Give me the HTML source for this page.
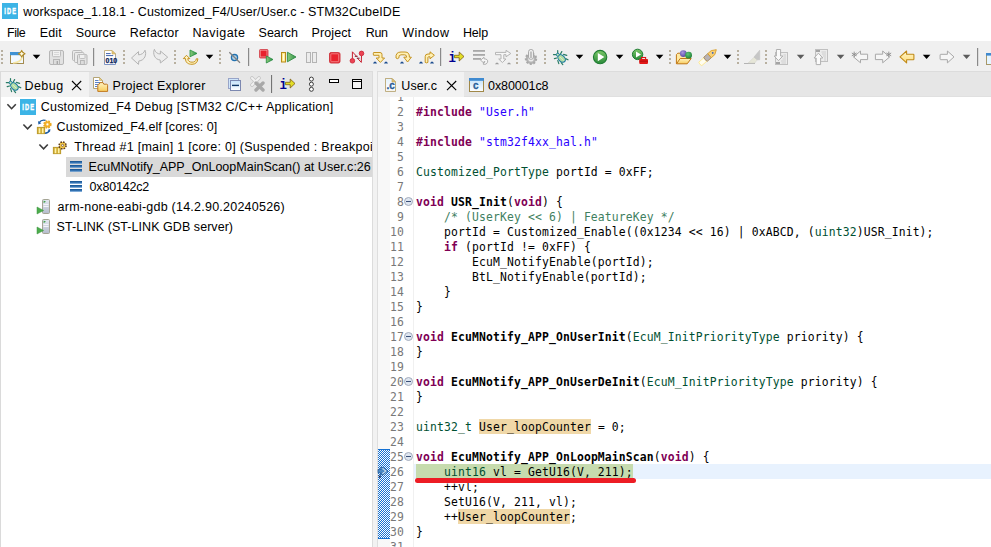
<!DOCTYPE html>
<html lang="en"><head><meta charset="utf-8"><title>STM32CubeIDE</title>
<style>
*{margin:0;padding:0;box-sizing:border-box}
html,body{width:991px;height:547px;overflow:hidden;background:#fff}
body{position:relative;font-family:"Liberation Sans",sans-serif;font-size:12.5px;color:#000}
.a{position:absolute;white-space:pre}
.t{position:absolute;white-space:pre;line-height:16px;height:16px;transform-origin:0 50%}
#title{left:0;top:0;width:991px;height:22px;background:#fff}
#menu{left:0;top:22px;width:991px;height:19px;background:#fff}
#tool{left:0;top:41px;width:991px;height:31px;background:#f0f0f0}
#work{left:0;top:72px;width:991px;height:475px;background:#f2f2f2}
#lp{left:0;top:71px;width:373px;height:476px;background:#fff;border-left:1px solid #dadada;border-right:1px solid #dcdcdc;border-top:1px solid #dcdcdc}
#ltab{left:1px;top:72px;width:371px;height:25px;background:#e6e6e6;border-bottom:1px solid #e0e0e0}
#ltabA{left:1px;top:72px;width:88px;height:25px;background:#f2f2f2}
#rp{left:377px;top:71px;width:614px;height:476px;background:#fff;border-left:1px solid #dedede;border-top:1px solid #dcdcdc}
#rtab{left:378px;top:72px;width:613px;height:25px;background:#e6e6e6;border-bottom:1px solid #e0e0e0}
#rtabA{left:378px;top:72px;width:86px;height:25px;background:#f2f2f2}
#gut{left:378px;top:97px;width:12px;height:450px;background:#f8f8f8}
.code{position:absolute;left:416px;white-space:pre;font-family:"DejaVu Sans Mono","Liberation Mono",monospace;font-size:11.4px;letter-spacing:0.137px;line-height:15px;height:15px;color:#000}
.ln{position:absolute;left:378px;width:26px;text-align:right;white-space:pre;font-family:"DejaVu Sans Mono","Liberation Mono",monospace;font-size:11.4px;letter-spacing:0.137px;line-height:15px;height:15px;color:#787878}
.k{color:#7f0055;font-weight:bold}
.s{color:#2a00ff}
.c{color:#3f7f5f}
.y{color:#005032}
.f{font-weight:bold}
.o{}
.sel{left:66px;top:157px;width:306px;height:20px;background:#d9d9d9}
</style></head>
<body>
<div class="a" id="title"></div>
<div class="a" id="menu"></div>
<div class="a" id="tool"></div>
<div class="a" id="work"></div>
<div class="a" id="lp"></div><div class="a" id="ltab"></div><div class="a" id="ltabA"></div>
<div class="a" id="rp"></div><div class="a" id="rtab"></div><div class="a" id="rtabA"></div><div class="a" id="gut"></div>
<div class="t" style="left:23.3px;top:4px;letter-spacing:0.103px">workspace_1.18.1 - Customized_F4/User/User.c - STM32CubeIDE</div>
<div class="t" style="left:7.0px;top:25px;letter-spacing:-0.467px">File</div>
<div class="t" style="left:39.7px;top:25px;letter-spacing:0.133px">Edit</div>
<div class="t" style="left:75.7px;top:25px;letter-spacing:0.120px">Source</div>
<div class="t" style="left:129.7px;top:25px;letter-spacing:0.257px">Refactor</div>
<div class="t" style="left:192.4px;top:25px;letter-spacing:0.457px">Navigate</div>
<div class="t" style="left:258.6px;top:25px;letter-spacing:-0.040px">Search</div>
<div class="t" style="left:311.6px;top:25px;letter-spacing:0.100px">Project</div>
<div class="t" style="left:365.8px;top:25px;letter-spacing:-0.400px">Run</div>
<div class="t" style="left:402.2px;top:25px;letter-spacing:0.480px">Window</div>
<div class="t" style="left:463.0px;top:25px;letter-spacing:-0.200px">Help</div>
<div class="t" style="left:24.4px;top:78px;letter-spacing:0.500px">Debug</div>
<div class="t" style="left:112.6px;top:78px;letter-spacing:0.253px">Project Explorer</div>
<div class="t" style="left:401.3px;top:78px;letter-spacing:0.080px">User.c</div>
<div class="t" style="left:488.0px;top:78px;letter-spacing:-0.075px">0x80001c8</div>
<div class="t" style="left:40.7px;top:99px;letter-spacing:0.236px">Customized_F4 Debug [STM32 C/C++ Application]</div>
<div class="t" style="left:56.6px;top:119px;letter-spacing:0.059px">Customized_F4.elf [cores: 0]</div>
<div class="a" style="left:60px;top:137px;width:312px;height:20px;overflow:hidden"><div class="t" style="left:14.3px;top:2px;letter-spacing:0.290px">Thread #1 [main] 1 [core: 0] (Suspended : Breakpoint)</div></div>
<div class="a sel"></div>
<div class="t" style="left:88.6px;top:159px;letter-spacing:0.019px">EcuMNotify_APP_OnLoopMainScan() at User.c:26</div>
<div class="t" style="left:89.6px;top:179px;letter-spacing:-0.200px">0x80142c2</div>
<div class="t" style="left:57.6px;top:199px;letter-spacing:0.234px">arm-none-eabi-gdb (14.2.90.20240526)</div>
<div class="t" style="left:56.6px;top:219px;letter-spacing:0.052px">ST-LINK (ST-LINK GDB server)</div>
<div class="a" style="left:479px;top:419px;width:112px;height:15px;background:#f0d8a8"></div><div class="a" style="left:458px;top:509px;width:112px;height:15px;background:#f0d8a8"></div>
<div class="a" style="left:414px;top:464px;width:577px;height:15px;background:#e8f2fe"></div>
<div class="a" style="left:416px;top:464px;width:217px;height:15px;background:#c6dbae"></div>
<div class="a" style="left:378px;top:449px;width:12px;height:90px;background:conic-gradient(#1470d2 25%,#fff 0 50%,#1470d2 0 75%,#fff 0) 0 0/2px 2px;border-top:1px solid #1470d2;border-bottom:1px solid #1470d2"></div>
<div class="a" style="left:413px;top:97px;width:1px;height:450px;background:#f0f0f0"></div>
<div class="a" style="left:378px;top:97px;width:613px;height:450px;overflow:hidden">
<div class="ln" style="left:0;top:-7px">1</div>
<div class="ln" style="left:0;top:8px">2</div><div class="code" style="left:38px;top:8px"><span class="k">#include</span> <span class="s">&quot;User.h&quot;</span></div>
<div class="ln" style="left:0;top:23px">3</div>
<div class="ln" style="left:0;top:38px">4</div><div class="code" style="left:38px;top:38px"><span class="k">#include</span> <span class="s">&quot;stm32f4xx_hal.h&quot;</span></div>
<div class="ln" style="left:0;top:53px">5</div>
<div class="ln" style="left:0;top:68px">6</div><div class="code" style="left:38px;top:68px"><span class="y">Customized_PortType</span> portId = 0xFF;</div>
<div class="ln" style="left:0;top:83px">7</div>
<div class="ln" style="left:0;top:98px">8</div><div class="code" style="left:38px;top:98px"><span class="k">void</span> <span class="f">USR_Init</span>(<span class="k">void</span>) {</div>
<div class="ln" style="left:0;top:113px">9</div><div class="code" style="left:38px;top:113px">    <span class="c">/* (UserKey &lt;&lt; 6) | FeatureKey */</span></div>
<div class="ln" style="left:0;top:128px">10</div><div class="code" style="left:38px;top:128px">    portId = Customized_Enable((0x1234 &lt;&lt; 16) | 0xABCD, (<span class="y">uint32</span>)USR_Init);</div>
<div class="ln" style="left:0;top:143px">11</div><div class="code" style="left:38px;top:143px">    <span class="k">if</span> (portId != 0xFF) {</div>
<div class="ln" style="left:0;top:158px">12</div><div class="code" style="left:38px;top:158px">        EcuM_NotifyEnable(portId);</div>
<div class="ln" style="left:0;top:173px">13</div><div class="code" style="left:38px;top:173px">        BtL_NotifyEnable(portId);</div>
<div class="ln" style="left:0;top:188px">14</div><div class="code" style="left:38px;top:188px">    }</div>
<div class="ln" style="left:0;top:203px">15</div><div class="code" style="left:38px;top:203px">}</div>
<div class="ln" style="left:0;top:218px">16</div>
<div class="ln" style="left:0;top:233px">17</div><div class="code" style="left:38px;top:233px"><span class="k">void</span> <span class="f">EcuMNotify_APP_OnUserInit</span>(<span class="y">EcuM_InitPriorityType</span> priority) {</div>
<div class="ln" style="left:0;top:248px">18</div><div class="code" style="left:38px;top:248px">}</div>
<div class="ln" style="left:0;top:263px">19</div>
<div class="ln" style="left:0;top:278px">20</div><div class="code" style="left:38px;top:278px"><span class="k">void</span> <span class="f">EcuMNotify_APP_OnUserDeInit</span>(<span class="y">EcuM_InitPriorityType</span> priority) {</div>
<div class="ln" style="left:0;top:293px">21</div><div class="code" style="left:38px;top:293px">}</div>
<div class="ln" style="left:0;top:308px">22</div>
<div class="ln" style="left:0;top:323px">23</div><div class="code" style="left:38px;top:323px"><span class="y">uint32_t</span> <span class="o">User_loopCounter</span> = 0;</div>
<div class="ln" style="left:0;top:338px">24</div>
<div class="ln" style="left:0;top:353px">25</div><div class="code" style="left:38px;top:353px"><span class="k">void</span> <span class="f">EcuMNotify_APP_OnLoopMainScan</span>(<span class="k">void</span>) {</div>
<div class="ln" style="left:0;top:368px">26</div><div class="code" style="left:38px;top:368px">    <span class="y">uint16</span> vl = GetU16(V, 211);</div>
<div class="ln" style="left:0;top:383px">27</div><div class="code" style="left:38px;top:383px">    ++vl;</div>
<div class="ln" style="left:0;top:398px">28</div><div class="code" style="left:38px;top:398px">    SetU16(V, 211, vl);</div>
<div class="ln" style="left:0;top:413px">29</div><div class="code" style="left:38px;top:413px">    ++<span class="o">User_loopCounter</span>;</div>
<div class="ln" style="left:0;top:428px">30</div><div class="code" style="left:38px;top:428px">}</div>
<div class="ln" style="left:0;top:443px">31</div>
</div>
<div class="a" style="left:415px;top:478px;width:221px;height:5px;border-radius:3px;background:#ed1c24"></div>
<svg class="a" style="left:0;top:0" width="991" height="547" viewBox="0 0 991 547">
<defs>
<linearGradient id="gGreen" x1="0" y1="0" x2="0" y2="1"><stop offset="0" stop-color="#7cc868"/><stop offset="1" stop-color="#2a8a3a"/></linearGradient>
<linearGradient id="gTri" x1="0" y1="0" x2="1" y2="0"><stop offset="0" stop-color="#8ccc7c"/><stop offset="1" stop-color="#2e9048"/></linearGradient>
<linearGradient id="gYel" x1="0" y1="0" x2="0" y2="1"><stop offset="0" stop-color="#fff6cc"/><stop offset="1" stop-color="#ffdc78"/></linearGradient>
<linearGradient id="gFold" x1="0" y1="0" x2="0" y2="1"><stop offset="0" stop-color="#fff4c4"/><stop offset="1" stop-color="#f8cc5c"/></linearGradient>
<linearGradient id="gPage" x1="0" y1="0" x2="0" y2="1"><stop offset="0" stop-color="#c8b480"/><stop offset="1" stop-color="#7c94c4"/></linearGradient>
<linearGradient id="gWin" x1="0" y1="0" x2="0" y2="1"><stop offset="0" stop-color="#c4e2fa"/><stop offset="1" stop-color="#ffffff"/></linearGradient>
<linearGradient id="gBar" x1="0" y1="0" x2="0" y2="1"><stop offset="0" stop-color="#14508e"/><stop offset="1" stop-color="#4c8ccc"/></linearGradient>
<linearGradient id="gSrv" x1="0" y1="0" x2="0" y2="1"><stop offset="0" stop-color="#e4e8f0"/><stop offset="1" stop-color="#b4bccc"/></linearGradient>
<radialGradient id="gPur" cx=".4" cy=".35" r=".7"><stop offset="0" stop-color="#a898e0"/><stop offset="1" stop-color="#5444a0"/></radialGradient>
<radialGradient id="gGrn" cx=".4" cy=".35" r=".7"><stop offset="0" stop-color="#60c878"/><stop offset="1" stop-color="#1c7c34"/></radialGradient>
<g id="dots" fill="#b8b0a0"><rect x="0" y="50" width="2" height="2"/><rect x="0" y="54" width="2" height="2"/><rect x="0" y="58" width="2" height="2"/><rect x="0" y="62" width="2" height="2"/></g>
<polygon id="dd" points="0,54.8 7.6,54.8 3.8,59"/>
<g id="bug">
 <g stroke="#2a7c64" stroke-width="1.2" stroke-linecap="round" fill="none">
  <path d="M10.5,78.5V81M6.3,82.6H9M14.6,79.6L13.4,81.8M16.4,82.4L19.6,83.4M18.4,86.6L20.8,87.8M7.2,86.7L9.6,86M10.6,88.6L11.6,91.6M14,90.6L15.6,92.6"/>
 </g>
 <ellipse cx="14.4" cy="86.4" rx="4.4" ry="3" transform="rotate(45 14.4 86.4)" fill="#b4dca4" stroke="#1c7ca0" stroke-width="1.1"/>
 <path d="M12.6,84.8L16.4,88.4" stroke="#d8f0cc" stroke-width="1"/>
 <circle cx="10.6" cy="82.7" r="1.5" fill="#c8e8b0" stroke="#1c7ca0" stroke-width="1"/>
</g>
<g id="istep">
 <text transform="translate(279.5 89.2) scale(.8 1)" font-family="'Liberation Mono',monospace" font-weight="bold" font-size="15.5" fill="#000090">i</text>
 <polygon points="285.4,82.3 290.2,82.3 290.2,79 295,83.5 290.2,88 290.2,84.7 285.4,84.7" fill="#e2de26" stroke="#7c5c14" stroke-width=".8" stroke-linejoin="round"/>
</g>
<g id="ide">
 <rect x="0" y="0" width="16" height="16" fill="#3cb4e6"/>
 <text transform="translate(2.2 11.3) scale(.6 1)" font-family="'Liberation Sans',sans-serif" font-weight="bold" font-size="9.4" letter-spacing="2" fill="#fff" stroke="#fff" stroke-width=".5">IDE</text>
</g>
<path id="chev" d="M0.2,0L4.4,4.4L8.6,0" fill="none" stroke="#3c3c3c" stroke-width="1.6"/>
<g id="stack" fill="url(#gBar)"><rect x="70" y="161" width="12" height="2.7"/><rect x="70" y="165" width="12" height="2.7"/><rect x="70" y="169" width="12" height="2.7"/></g>
<g id="proc">
 <rect x="42.5" y="199.5" width="7" height="14" rx="1" fill="url(#gSrv)" stroke="#a4a494"/>
 <path d="M43.5,204.5H48.5M43.5,206.5H48.5" stroke="#f4f4f8" stroke-width="1"/>
 <polygon points="43.6,200.6 46,201.8 43.6,203" fill="#3c9c48"/>
 <polygon points="37,207 43.6,210.5 37,214" fill="#4cac4c" stroke="#3c9440" stroke-width=".5"/>
</g>
<g id="fold"><circle cx="408.5" cy="0" r="4" fill="#dde5f0" stroke="#a4acbc" stroke-width="1"/><rect x="406" y="-.5" width="5" height="1" fill="#3a5078"/></g>
<g id="xclose" stroke="#000" stroke-width="1.1"><path d="M0,0L9.2,9.2M9.2,0L0,9.2"/></g>
</defs>
<!-- title icon -->
<use href="#ide" x="2" y="3"/>
<!-- toolbar handles, separators, dropdowns -->
<use href="#dots" x="1"/><use href="#dots" x="123"/><use href="#dots" x="174"/><use href="#dots" x="219"/><use href="#dots" x="516"/><use href="#dots" x="544"/><use href="#dots" x="669"/><use href="#dots" x="737"/><use href="#dots" x="765"/>
<g fill="#8a8a8a"><rect x="93" y="48" width="1.2" height="18"/><rect x="248" y="48" width="1.2" height="18"/><rect x="440" y="48" width="1.2" height="18"/><rect x="977" y="48" width="1.2" height="18"/></g>
<g fill="#000"><use href="#dd" x="32.7"/><use href="#dd" x="205.7"/><use href="#dd" x="575.7"/><use href="#dd" x="615.8"/><use href="#dd" x="655.8"/><use href="#dd" x="723.7"/><use href="#dd" x="922.8"/></g>
<g fill="#5c5c5c"><use href="#dd" x="796.8"/><use href="#dd" x="836.8"/><use href="#dd" x="962.8"/></g>
<!-- new -->
<rect x="10.5" y="52.5" width="13" height="11" fill="#f2f9ff" stroke="#a48c50"/>
<rect x="10" y="52" width="10" height="3.2" fill="#3f92d4"/>
<path d="M13,63Q21,62.5 22.3,56.5" fill="none" stroke="#f6e6a4" stroke-width="1.6"/>
<polygon points="21.7,50.4 22.9,52.5 25,53.7 22.9,54.9 21.7,57 20.5,54.9 18.4,53.7 20.5,52.5" fill="#fffbe4" stroke="#b08a24" stroke-width="1.1" stroke-linejoin="round"/>
<!-- save (disabled) -->
<rect x="49.5" y="50.5" width="14" height="14" rx="1.5" fill="#e2e2e2" stroke="#b6b6b6"/>
<rect x="52.5" y="50.5" width="8" height="6.2" rx="1" fill="#f0f0f0" stroke="#bcbcbc"/>
<path d="M54,52.5H59M54,54.5H59" stroke="#d0d0d0" stroke-width=".8"/>
<rect x="53.5" y="59.5" width="6" height="5" fill="#dcdcdc" stroke="#b6b6b6"/>
<rect x="56.6" y="61" width="1.4" height="3" fill="#a8a8a8"/>
<!-- save all (disabled) -->
<rect x="72.5" y="50.5" width="9.5" height="10" rx="1.2" fill="#ebebeb" stroke="#bababa"/>
<rect x="74.5" y="52.5" width="9.5" height="10" rx="1.2" fill="#ebebeb" stroke="#bababa"/>
<rect x="77.5" y="54.5" width="9.5" height="10" rx="1.2" fill="#e4e4e4" stroke="#b6b6b6"/>
<rect x="79.5" y="54.5" width="5.5" height="4" rx=".8" fill="#f0f0f0" stroke="#c0c0c0"/>
<rect x="80.5" y="60.5" width="3.8" height="4" fill="#dcdcdc" stroke="#b6b6b6"/>
<!-- binary file -->
<path d="M104.5,50.5H112L115.5,54V64.5H104.5Z" fill="#fff" stroke="url(#gPage)"/>
<path d="M112,50.5V54H115.5Z" fill="#e6c678" stroke="#c8a858" stroke-width=".6"/>
<rect x="106" y="53" width="4.6" height="1.1" fill="#5472b4"/><rect x="106" y="55" width="7.2" height="1.1" fill="#5472b4"/>
<text x="105.6" y="63.3" font-family="'Liberation Sans',sans-serif" font-weight="bold" font-size="7.6" fill="#0a2258" stroke="#0a2258" stroke-width=".25" textLength="11.6" lengthAdjust="spacingAndGlyphs">010</text>
<!-- undo / redo (disabled) -->
<path d="M131.5,58L138.5,51.6V54.8C141.5,54.8 144,53 145,50.2C146.8,54 145,60.5 138.8,61L138.5,64.4Z" fill="#ededed" stroke="#b4b4b4" stroke-linejoin="round"/>
<path d="M167.7,57.2L160.4,51V54C157.5,54 155.2,52.2 154.4,49.3C152.5,53.5 154.5,59.5 160.2,60L160.4,63Z" fill="#ededed" stroke="#b4b4b4" stroke-linejoin="round"/>
<!-- re-run -->
<polygon points="190,50 197,53.4 190,56.8" fill="url(#gTri)" stroke="#22903e" stroke-width=".8" stroke-linejoin="round"/>
<path d="M186.5,55.3L189.8,58.6H187.8C187.8,61.2 189.8,62.2 192,62.2C194.4,62.2 196,61.2 196.3,58.8H197.9C197.6,62.4 195.4,64.3 192,64.3C188.2,64.3 185.5,62.8 185.5,58.6H183.3Z" fill="#fff2c0" stroke="#c08a10" stroke-width=".9" stroke-linejoin="round"/>
<!-- skip breakpoints -->
<circle cx="234.5" cy="57.6" r="3.1" fill="#b4d2e6" stroke="#2272b0" stroke-width="1.3"/>
<path d="M229.3,52.3L240,62.8" stroke="#808080" stroke-width="1.2"/>
<!-- terminate & relaunch -->
<rect x="259.5" y="49.5" width="8.5" height="8.5" rx="1" fill="#e8222c" stroke="#d8545c"/>
<rect x="260.6" y="50.6" width="6.3" height="6.3" fill="none" stroke="#f4a4a4" stroke-width=".6"/>
<polygon points="266.3,56 273,59.5 266.3,63" fill="url(#gTri)" stroke="#22883c" stroke-width=".8" stroke-linejoin="round"/>
<!-- resume -->
<rect x="281.5" y="52.5" width="4" height="9.5" fill="#ffe88c" stroke="#b88c18"/>
<rect x="283" y="54" width="1.2" height="6.5" fill="#fffbe0"/>
<polygon points="287.4,52.2 296,57 287.4,61.8" fill="url(#gTri)" stroke="#2e8a44" stroke-width=".9" stroke-linejoin="round"/>
<!-- suspend (disabled) -->
<rect x="306.5" y="52.5" width="4" height="10" fill="#ececec" stroke="#b4b4b4"/><rect x="312.5" y="52.5" width="4" height="10" fill="#ececec" stroke="#b4b4b4"/>
<!-- terminate -->
<rect x="329.5" y="52.5" width="10.5" height="10.5" rx="1.6" fill="#e8222c" stroke="#d03c44"/>
<rect x="330.8" y="53.8" width="7.9" height="7.9" rx=".6" fill="none" stroke="#f6a0a0" stroke-width=".7"/>
<!-- disconnect -->
<g stroke="#c82030" stroke-width="1" fill="none"><path d="M352.4,58.5V51.8L356.6,56.3M357.4,58.2L361.3,62.4L361.5,55.6"/></g>
<path d="M354.8,56.3H357.6M356.8,58.2H359.6" stroke="#801020" stroke-width="1"/>
<circle cx="352.4" cy="60.8" r="2.3" fill="#ec4454" stroke="#c82030" stroke-width=".8"/><circle cx="361.5" cy="53.4" r="2.3" fill="#ec4454" stroke="#c82030" stroke-width=".8"/>
<!-- step into -->
<path d="M373.6,52.5H380Q382,52.5 382,54.5V58H384.6L380.4,62.4L376.2,58H379V55.3H373.6Q372.8,53.9 373.6,52.5Z" fill="#fff0b4" stroke="#c08a10" stroke-width=".9" stroke-linejoin="round"/>
<g fill="#1e4e90"><path d="M373,63.4Q375,59.8 377,63.4Z"/><path d="M384,63.4Q386,59.8 388,63.4Z"/>
<!-- step over dashes / step return dashes -->
<path d="M400,63.4Q402,59.8 404,63.4Z"/><path d="M419,63.4Q421,59.8 423,63.4Z"/><path d="M430,63.4Q432,59.8 434,63.4Z"/></g>
<path d="M396,58Q395.4,52 401,52H405Q409.6,52 409.4,57.2H411.4L407.6,62L403.8,57.2H406.6Q406.7,54.8 404.5,54.8H401Q398.6,54.8 398.8,58Q397.4,59.3 396,58Z" fill="#fff0b4" stroke="#c08a10" stroke-width=".9" stroke-linejoin="round"/>
<path d="M425.2,62.4V56.5Q425.2,54 428,54H430V51.8L434.4,55.3L430,58.8V56.8H428.6Q427.9,56.8 427.9,57.5V62.4Q426.5,63.4 425.2,62.4Z" fill="#fff0b4" stroke="#c08a10" stroke-width=".9" stroke-linejoin="round"/>
<!-- instruction stepping -->
<use href="#istep" x="169" y="-27"/>
<!-- drop to frame (disabled) -->
<g fill="#a8a8a8"><rect x="473" y="50" width="12" height="1.8"/><rect x="473" y="54" width="12" height="1.8"/><rect x="473" y="58" width="8" height="1.8"/></g>
<path d="M480.6,60.2L484,57.2V58.8Q488.4,59 487.6,62.2Q486.8,64.9 483.4,64.4V62.4Q485,62.6 485,61.6H484V63.2Z" fill="#f6f6f6" stroke="#b0b0b0" stroke-linejoin="round"/>
<!-- step filters (disabled) -->
<path d="M495.5,52.4H506V50.3L510.8,53.5L506,56.8V54.7H503.8V59H506L502.4,62.5L498.7,59H501V54.7H495.5Z" fill="#f6f6f6" stroke="#b4b4b4" stroke-linejoin="round"/>
<g fill="#9c9c9c"><path d="M495,64.2Q497,60.6 499,64.2Z"/><path d="M507,64.2Q509,60.6 511,64.2Z"/></g>
<!-- reset (disabled) -->
<circle cx="531" cy="58.8" r="5.2" fill="#b4b4b4" stroke="#a8a8a8" stroke-width="2" stroke-dasharray="2 1.6"/>
<circle cx="531" cy="58.8" r="2.8" fill="#ececec"/>
<rect x="528.6" y="49.5" width="4.8" height="9.8" rx="2.2" fill="#f4f4f4" stroke="#a4a4a4"/>
<path d="M531,51.5V58" stroke="#a4a4a4" stroke-width="1.3"/>
<!-- debug bug -->
<use href="#bug" x="547.2" y="-28"/>
<!-- run -->
<circle cx="600.1" cy="57.1" r="6.7" fill="url(#gGreen)" stroke="#1e7c32" stroke-width="1.1"/>
<polygon points="597.8,53 604.4,57.1 597.8,61.3" fill="#fff"/>
<!-- external tools -->
<circle cx="637.6" cy="54.4" r="5.2" fill="url(#gGreen)" stroke="#1e7c32" stroke-width="1"/>
<polygon points="636,51.4 641,54.4 636,57.4" fill="#fff"/>
<rect x="641.6" y="57.5" width="4" height="2.4" fill="none" stroke="#dc1414" stroke-width="1.1"/>
<rect x="639.2" y="59" width="8.8" height="4.9" rx=".8" fill="#e21818"/>
<path d="M639.5,61.2H647.8" stroke="#a00808" stroke-width=".7"/>
<!-- open element -->
<path d="M676.4,63.8V54.6L677.8,53.2H681.2L682.4,54.6H689.6V58.5" fill="#ffe9a0" stroke="#c07818" stroke-linejoin="round"/>
<path d="M676.5,63.8L680.2,58.5H691.2L687.2,63.8Z" fill="url(#gFold)" stroke="#c07818" stroke-linejoin="round"/>
<circle cx="683.3" cy="53.6" r="3.4" fill="url(#gPur)"/><circle cx="688.6" cy="55.2" r="3.4" fill="url(#gGrn)"/>
<!-- pen -->
<g transform="translate(700.3 63.9) rotate(-41.6)">
 <path d="M0,-2.3H7V2.3H0Q-1.2,0 0,-2.3Z" fill="#fffdf0" stroke="#ffe888" stroke-width=".8"/>
 <path d="M7,-2.7H12.4V2.7H7Q5.8,0 7,-2.7Z" fill="#b8b2b4" stroke="#a48858" stroke-width=".8"/>
 <path d="M12.4,-2.7H17L21.4,0L17,2.7H12.4Z" fill="#f8d078" stroke="#d89a20" stroke-width=".8" stroke-linejoin="round"/>
 <circle cx="16.6" cy="0" r=".9" fill="#2c5cc0"/>
</g>
<!-- marker (disabled) -->
<path d="M744,63.5H755" stroke="#b4b4b4" stroke-width="1"/>
<polygon points="748.2,63 754.8,63 757.2,59.8 754,57.2" fill="#e6e6d8" stroke="#d0d0c8" stroke-width=".5"/>
<polygon points="754,57 759.7,50.2 759.7,59.8 757.2,59.8" fill="#c6c6c6" stroke="#bcbcbc" stroke-width=".5"/>
<!-- next annotation (disabled) -->
<rect x="775.5" y="52.5" width="12" height="12" fill="#ececec" stroke="#c0c0c0"/>
<path d="M783.5,55H786M783.5,57H786M782.5,59H786M781,61H786M781.5,63H786" stroke="#cccccc" stroke-width=".9"/>
<rect x="776" y="62" width="4" height="2" fill="#a4a4a4"/>
<path d="M776.4,49.5H780.6V56H782.9L778.5,60.6L774.1,56H776.4Z" fill="#fafafa" stroke="#b0b0b0" stroke-linejoin="round"/>
<!-- prev annotation (disabled) -->
<rect x="815.5" y="49.5" width="12" height="12" fill="#ececec" stroke="#c0c0c0"/>
<path d="M821.5,52H826M822,54H826M823,56H826M824,58H826M824,60H826" stroke="#cccccc" stroke-width=".9"/>
<rect x="816" y="50" width="4" height="2" fill="#a4a4a4"/>
<path d="M818.4,53.2L822.8,58H820.6V64.6H816.2V58H814Z" fill="#fafafa" stroke="#b0b0b0" stroke-linejoin="round"/>
<!-- last edit / next edit (disabled) -->
<path d="M853.6,57L860.5,51V54.2H867.6V59.6H860.5V62.8Z" fill="#f6f6f6" stroke="#a8a8a8" stroke-linejoin="round"/>
<path d="M854.2,51.6V57.2M851.8,53L856.6,55.8M856.6,53L851.8,55.8" stroke="#8c8c8c" stroke-width=".9"/>
<path d="M889.6,57L882.7,51V54.2H875.4V59.6H882.7V62.8Z" fill="#f6f6f6" stroke="#a8a8a8" stroke-linejoin="round"/>
<path d="M888.8,51.6V57.2M886.4,53L891.2,55.8M891.2,53L886.4,55.8" stroke="#8c8c8c" stroke-width=".9"/>
<!-- back / forward -->
<path d="M900,56.9L906.6,51V54.3H913.2Q913.9,54.3 913.9,55V58.9Q913.9,59.7 913.2,59.7H906.6V62.9Z" fill="url(#gYel)" stroke="#c08a18" stroke-width="1.1" stroke-linejoin="round"/>
<path d="M954,56.9L947.4,51V54.3H940.8Q940.1,54.3 940.1,55V58.9Q940.1,59.7 940.8,59.7H947.4V62.9Z" fill="#f6f6f6" stroke="#a8a8a8" stroke-linejoin="round"/>
<!-- perspective icon (cut off) -->
<rect x="986.5" y="53.5" width="10" height="11" fill="#e6f5ff" stroke="#a89868"/>
<rect x="986" y="53" width="10" height="2.6" fill="#3f8ad0"/>
<!-- left view tab icons -->
<use href="#bug"/>
<use href="#xclose" x="72" y="81"/>
<path d="M93.5,77.5H99.5L102.5,80.5V88.5H93.5Z" fill="#fff" stroke="#b4a476"/>
<path d="M99.5,77.5V80.5H102.5Z" fill="#e6cc88" stroke="#c0a860" stroke-width=".6"/>
<path d="M95,80.5H98.5M95,82.5H100M95,84.5H98M95,86.5H97.5" stroke="#5a80c8" stroke-width="1"/>
<path d="M97.8,91.4V85.2Q97.8,84.2 98.8,84.2H99.2L100,82.6H103L103.8,84.2H106.6Q107.6,84.2 107.6,85.2V91.4Z" fill="url(#gFold)" stroke="#c07820" stroke-linejoin="round"/>
<!-- collapse all -->
<rect x="228.5" y="78.5" width="10" height="10" fill="#cfe6fb" stroke="#98a4c8"/>
<rect x="230.5" y="80.5" width="10" height="10" fill="url(#gWin)" stroke="#7c88b0"/>
<rect x="232" y="84.7" width="7" height="1.4" fill="#103868"/>
<!-- remove all terminated (disabled) -->
<g stroke-linecap="round">
<path d="M252,78L259,85M259,78L252,85" stroke="#c4c4c4" stroke-width="3.6"/>
<path d="M252,78L259,85M259,78L252,85" stroke="#f2f2f2" stroke-width="2"/>
<path d="M256,83L263,90M263,83L256,90" stroke="#a8a8a8" stroke-width="3.4"/>
</g>
<rect x="271" y="75" width="1.1" height="18" fill="#747474"/>
<use href="#istep"/>
<g fill="#fff" stroke="#3c3c3c" stroke-width="1"><circle cx="311.4" cy="79.1" r="2"/><circle cx="311.4" cy="84.2" r="2"/><circle cx="311.4" cy="89.3" r="2"/></g>
<rect x="329.5" y="79.5" width="9" height="3" fill="#fff" stroke="#000"/>
<rect x="352.5" y="79.5" width="9" height="9" fill="#f4f4f4" stroke="#000"/><path d="M352.5,81.5H361.5" stroke="#000"/>
<!-- editor tab icons -->
<path d="M385.5,78.5H392L395.5,82V91.3H385.5Z" fill="url(#gWin)" stroke="#a89050"/>
<path d="M385.5,78.5H392L395.5,82V91.3H385.5Z" fill="#fff" fill-opacity=".55"/>
<path d="M392,78.5V82H395.5Z" fill="#e6c678" stroke="#b89c50" stroke-width=".6"/>
<text x="386.4" y="89.3" font-family="'Liberation Sans',sans-serif" font-weight="bold" font-size="10" fill="#2a5a94" stroke="#2a5a94" stroke-width=".3" textLength="8.4" lengthAdjust="spacingAndGlyphs">.c</text>
<use href="#xclose" x="447" y="81"/>
<rect x="469.5" y="78.5" width="14" height="13" fill="url(#gWin)" stroke="#a08848"/>
<rect x="469" y="78" width="15" height="2.8" fill="#3f8ad0"/>
<text x="473" y="88.8" font-family="'Liberation Sans',sans-serif" font-weight="bold" font-size="10" fill="#2a6098" stroke="#2a6098" stroke-width=".3">c</text>
<!-- tree icons -->
<use href="#chev" x="7.2" y="104.3"/><use href="#chev" x="23.2" y="124.5"/><use href="#chev" x="39.2" y="144.5"/>
<use href="#ide" x="20" y="99"/>
<!-- exe icon -->
<g fill="none" stroke="#1c5ca4" stroke-width="1.4"><path d="M45.6,120.4Q41.6,119.2 39,122.6"/><path d="M45,133.2Q48.4,133 49.6,130.4"/></g>
<polygon points="38,121 38.4,124.4 41.4,123.2" fill="#2060a8"/><polygon points="50.4,129 47.6,130 50,132" fill="#2060a8"/>
<rect x="37.2" y="127.2" width="7.6" height="6.6" fill="#c8a020" stroke="#b08c18" stroke-width=".6"/>
<rect x="38.6" y="128.2" width="1.8" height="5" fill="#fff2a8"/><rect x="41.8" y="128.2" width="1.8" height="5" fill="#fff2a8"/>
<circle cx="47.4" cy="124.4" r="3.2" fill="#f4b430" stroke="#eca820" stroke-width="2" stroke-dasharray="1.5 1.1"/>
<circle cx="47.4" cy="124.4" r="1.1" fill="#fff"/>
<!-- thread icon -->
<rect x="53.2" y="147.2" width="7.6" height="6.6" fill="#c8a020" stroke="#b08c18" stroke-width=".6"/>
<rect x="54.6" y="148.2" width="1.8" height="5" fill="#fff2a8"/><rect x="57.8" y="148.2" width="1.8" height="5" fill="#fff2a8"/>
<circle cx="62.6" cy="145.4" r="3.3" fill="#f4c848" stroke="#5c3c1c" stroke-width="1.9" stroke-dasharray="1.5 1.1"/>
<circle cx="62.6" cy="145.4" r="2.6" fill="#f4c848"/>
<circle cx="62.6" cy="145.4" r="1.1" fill="#eef" stroke="#5c3c1c" stroke-width=".6"/>
<use href="#stack"/><use href="#stack" y="20"/>
<use href="#proc"/><use href="#proc" y="20"/>
<!-- editor gutter -->
<use href="#fold" y="201.5"/><use href="#fold" y="336.5"/><use href="#fold" y="381.5"/><use href="#fold" y="456.5"/>
<path d="M378,469.4H381.2L380.2,467.4H383.2L388,471.1L383.2,474.8H380.2L381.2,472.8H378Z" fill="#4a88c4" stroke="#1e5696" stroke-width=".7" stroke-linejoin="round"/>
<path d="M382.4,468.4L385.8,471.1L382.4,473.8" fill="none" stroke="#c8dff2" stroke-width="1.2"/>
<polygon points="378.2,475.2 380,478.8 380.8,476" fill="#0c1c4c"/>
</svg>
</body></html>
